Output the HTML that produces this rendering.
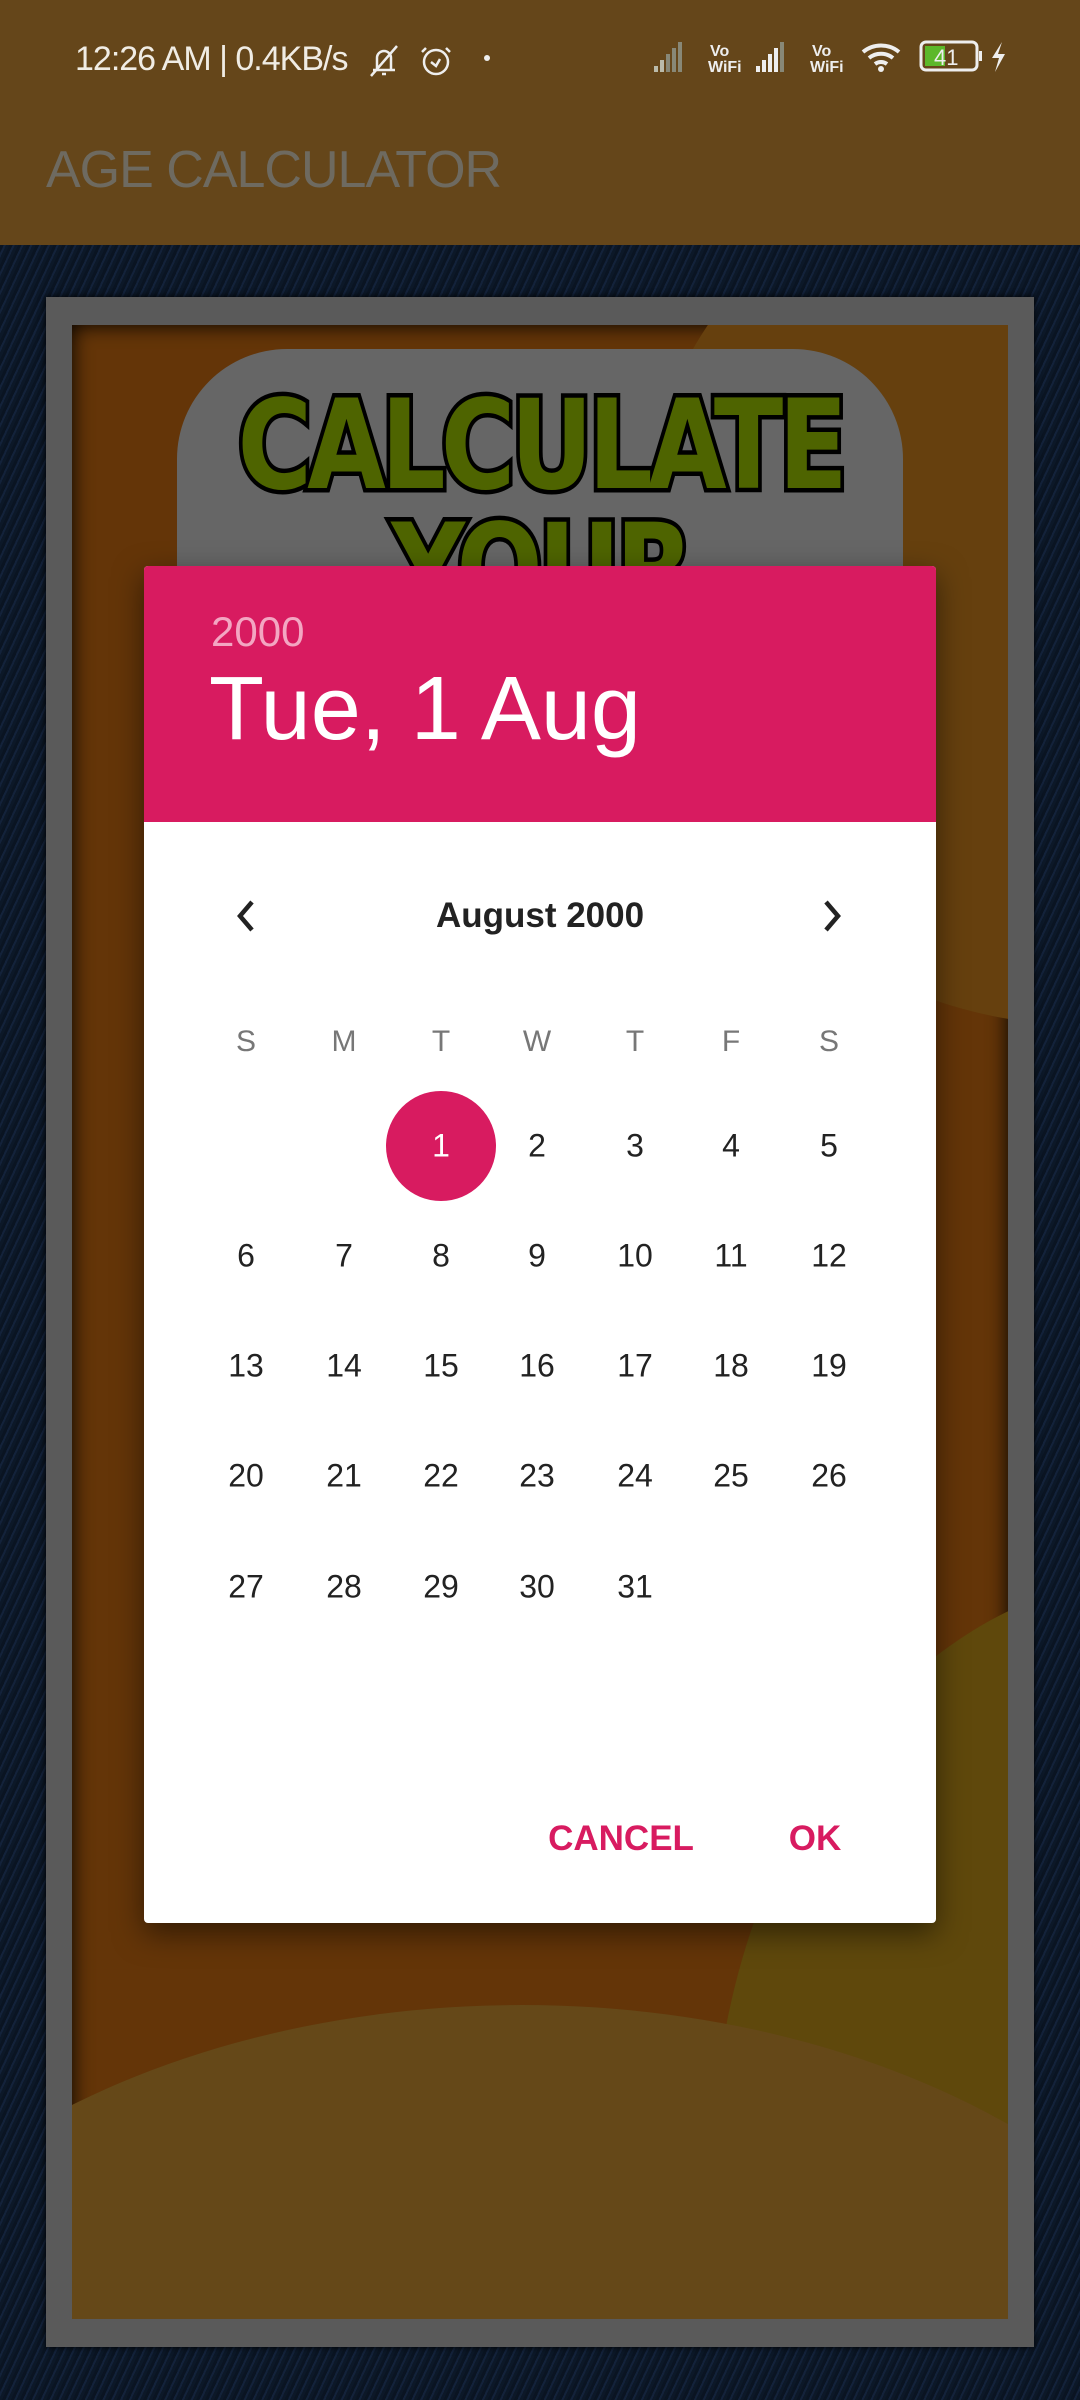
<!DOCTYPE html>
<html><head><meta charset="utf-8"><style>
*{margin:0;padding:0;box-sizing:border-box}
html,body{width:1080px;height:2400px;overflow:hidden}
body{position:relative;font-family:"Liberation Sans",sans-serif;
background:#0c1828 repeating-linear-gradient(115deg,#0a1422 0 3px,#13223a 3px 5px,#0c1828 5px 8px);}
.top{position:absolute;left:0;top:0;width:1080px;height:245px;background:#65461a}
.st{position:absolute;top:40px;color:#f0ece4;font-size:34px;letter-spacing:-1px}
.title{position:absolute;left:46px;top:140px;font-size:52px;color:#6e6a60;letter-spacing:-1px}
.outer{position:absolute;left:46px;top:297px;width:988px;height:2050px;background:#5a5a5a;box-shadow:0 0 6px #000}
.inner{position:absolute;left:72px;top:325px;width:936px;height:1994px;overflow:hidden;
background:#643508;box-shadow:inset 0 0 20px #000}
.blob{position:absolute;border-radius:50%}
.grey{position:absolute;left:177px;top:349px;width:726px;height:400px;background:#666;border-radius:110px 110px 0 0}
.calcw{position:absolute;left:140px;top:384px;width:800px;height:190px;overflow:hidden;text-align:center}
.calc{display:inline-block;font-size:124px;font-weight:900;color:#4e6400;
-webkit-text-stroke:9px #000;paint-order:stroke fill;letter-spacing:-6px;transform:scaleX(0.82);transform-origin:center top;line-height:1;font-family:"DejaVu Sans","Liberation Sans",sans-serif}
.dlg{position:absolute;left:144px;top:566px;width:792px;height:1357px;background:#fff;border-radius:4px;overflow:hidden;box-shadow:0 10px 30px rgba(0,0,0,.5)}
.hd{height:256px;background:#d81b60;position:relative}
.yr{position:absolute;left:67px;top:42px;font-size:42px;color:#f3a6c2}
.dt{position:absolute;left:65px;top:92px;font-size:90px;color:#fff}
.c{position:absolute;transform:translate(-50%,-50%);font-size:32px;color:#222;white-space:nowrap}
.w{color:#777;font-size:30px}
.sel{position:absolute;width:110px;height:110px;border-radius:50%;background:#d81b60;transform:translate(-50%,-50%)}
.btn{position:absolute;transform:translate(-50%,-50%);font-size:35px;color:#d81b60;font-weight:bold}
</style></head><body>
<div class="top">
<div class="st" style="left:75px">12:26 AM | 0.4KB/s</div>
<svg style="position:absolute;left:368px;top:42px" width="110" height="36" viewBox="0 0 110 36" fill="none" stroke="#eee" stroke-width="2.5"><path d="M5 28h22M9 28V16a7 7 0 0 1 14 0v12M3 34L29 4M14 32h4"/><circle cx="68" cy="20" r="12"/><path d="M63 20l5 4 4-7M58 6l-4 4M78 6l4 4"/></svg>
<div style="position:absolute;left:484px;top:55px;width:6px;height:6px;border-radius:50%;background:#eee"></div>
<svg style="position:absolute;left:650px;top:38px" width="370" height="40" viewBox="0 0 370 40"><g fill="#bba"><rect x="4" y="28" width="4" height="6"/><rect x="10" y="22" width="4" height="12"/><rect x="16" y="16" width="4" height="18" fill="#887"/><rect x="22" y="10" width="4" height="24" fill="#887"/><rect x="28" y="4" width="4" height="30" fill="#887"/></g>
<text x="60" y="18" font-size="16" fill="#eee" font-family="Liberation Sans" font-weight="bold">Vo</text><text x="58" y="34" font-size="16" fill="#eee" font-family="Liberation Sans" font-weight="bold">WiFi</text>
<g fill="#eee"><rect x="106" y="28" width="4" height="6"/><rect x="112" y="22" width="4" height="12"/><rect x="118" y="16" width="4" height="18"/><rect x="124" y="10" width="4" height="24"/><rect x="130" y="4" width="4" height="30" fill="#887"/></g>
<text x="162" y="18" font-size="16" fill="#eee" font-family="Liberation Sans" font-weight="bold">Vo</text><text x="160" y="34" font-size="16" fill="#eee" font-family="Liberation Sans" font-weight="bold">WiFi</text>
<path d="M213 14a28 28 0 0 1 36 0M219 20a19 19 0 0 1 24 0M225 26a10 10 0 0 1 12 0" stroke="#eee" stroke-width="4" fill="none"/><circle cx="231" cy="31" r="3" fill="#eee"/>
<rect x="271" y="4" width="56" height="28" rx="5" stroke="#eee" stroke-width="3" fill="none"/><rect x="275" y="8" width="20" height="20" fill="#5cb82a"/><text x="284" y="27" font-size="22" fill="#eee" font-family="Liberation Sans">41</text><rect x="329" y="13" width="3" height="10" fill="#eee"/>
<path d="M352 4l-10 16h7l-4 14 10-18h-7z" fill="#eee"/></svg>
<div class="title">AGE CALCULATOR</div>
</div>
<div class="outer"></div>
<div class="inner">
<div class="blob" style="left:560px;top:-200px;width:900px;height:900px;background:#66400e"></div>
<div class="blob" style="left:640px;top:1250px;width:900px;height:1200px;background:#5f480c"></div>
<div class="blob" style="left:-300px;top:1680px;width:1500px;height:1000px;background:#654818"></div>
</div>
<div class="grey"></div>
<div class="calcw"><div class="calc">CALCULATE<br>YOUR</div></div>
<div class="dlg">
<div class="hd"><div class="yr">2000</div><div class="dt">Tue, 1 Aug</div></div>
<svg style="position:absolute;left:88px;top:332px" width="28" height="36" viewBox="0 0 28 36"><path d="M20 4L8 18l12 14" stroke="#222" stroke-width="4.5" fill="none"/></svg>
<svg style="position:absolute;left:674px;top:332px" width="28" height="36" viewBox="0 0 28 36"><path d="M8 4l12 14L8 32" stroke="#222" stroke-width="4.5" fill="none"/></svg>
<div class="c" style="left:396px;top:350px;font-size:35px;font-weight:bold;color:#222">August 2000</div>
<div class="sel" style="left:297px;top:580px"></div>
<div id="g"></div>
<div class="btn" style="left:477px;top:1273px">CANCEL</div>
<div class="btn" style="left:671px;top:1273px">OK</div>
</div>
<script>
var xs=[102,200,297,393,491,587,685],ys=[580,690,800,910,1021];
var h='',wd='SMTWTFS';
for(var i=0;i<7;i++)h+='<div class="c w" style="left:'+xs[i]+'px;top:476px">'+wd[i]+'</div>';
for(var d=1;d<=31;d++){var p=d+1,r=Math.floor(p/7),c=p%7;h+='<div class="c" style="left:'+xs[c]+'px;top:'+ys[r]+'px'+(d==1?';color:#fff':'')+'">'+d+'</div>';}
document.getElementById('g').outerHTML=h;
</script>
</body></html>
